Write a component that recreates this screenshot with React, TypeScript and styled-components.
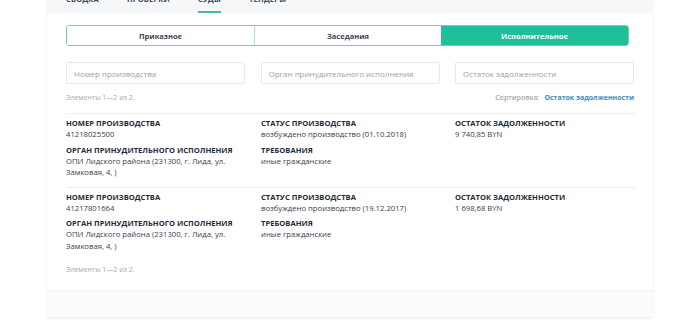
import React from "react";
import styled, { createGlobalStyle } from "styled-components";

const GlobalStyle = createGlobalStyle`
  html, body { margin: 0; padding: 0; background: #ffffff; }
  body { font-family: "Open Sans", "Noto Sans", sans-serif; -webkit-font-smoothing: antialiased; }
  * { box-sizing: border-box; }
`;

const Page = styled.div`
  width: 700px;
  height: 328px;
  overflow: hidden;
  padding-left: 47px;
`;

const Card = styled.div`
  width: 606px;
  margin-top: -12px;
  background: #ffffff;
  box-shadow: 0 1px 3px rgba(20, 40, 60, 0.1);
  border-radius: 0 0 2px 2px;
`;

const TabBar = styled.div`
  height: 25px;
  background: #f5f7f9;
  display: flex;
  align-items: flex-end;
  padding-left: 19px;
  gap: 28px;
`;

const Tab = styled.div<{ $active?: boolean }>`
  font-size: 7.5px;
  font-weight: 700;
  letter-spacing: 0.2px;
  text-transform: uppercase;
  color: #3b4756;
  line-height: 11px;
  height: 25px;
  padding-top: 6px;
  border-bottom: 2px solid ${(p) => (p.$active ? "#3cbfa4" : "transparent")};
`;

const Content = styled.div`
  padding: 12px 19px 0 19px;
`;

const Segmented = styled.div`
  width: 563px;
  height: 21px;
  display: grid;
  grid-template-columns: 1fr 1fr 1fr;
  border: 1.5px solid #6ccfb6;
  border-radius: 3px;
  overflow: hidden;
`;

const Segment = styled.div<{ $active?: boolean; $divider?: boolean }>`
  display: flex;
  align-items: center;
  justify-content: center;
  font-size: 7.5px;
  font-weight: 700;
  color: ${(p) => (p.$active ? "#ffffff" : "#3d4857")};
  background: ${(p) => (p.$active ? "#1fbf9c" : "#ffffff")};
  border-left: ${(p) => (p.$divider ? "1px solid #a8e2d4" : "none")};
`;

const Filters = styled.div`
  margin-top: 16px;
  display: grid;
  grid-template-columns: 179px 179px 179px;
  column-gap: 15.5px;
`;

const Input = styled.input`
  height: 22px;
  border: 1px solid #e7eaed;
  border-radius: 2px;
  padding: 0 7px;
  font-family: inherit;
  font-size: 8px;
  color: #333;
  outline: none;
  &::placeholder { color: #9aa1a8; }
`;

const Meta = styled.div`
  margin-top: 9px;
  width: 568px;
  display: flex;
  justify-content: space-between;
  align-items: center;
  line-height: 10px;
`;

const Muted = styled.span`
  font-size: 7px;
  color: #a3a9ae;
`;

const SortBox = styled.span`
  font-size: 7px;
  color: #a3a9ae;
  font-weight: 600;
  display: flex;
  gap: 5px;
`;

const SortLink = styled.span`
  color: #3c8cc0;
  font-weight: 700;
`;

const List = styled.div`
  margin-top: 10px;
  width: 570px;
`;

const Record = styled.div`
  border-top: 1px solid #eceef0;
  padding: 4px 0 8px;
  display: grid;
  grid-template-columns: 195px 194px 1fr;
`;

const Column = styled.div`
  display: flex;
  flex-direction: column;
  gap: 4px;
`;

const Field = styled.div`
  display: flex;
  flex-direction: column;
`;

const Label = styled.div`
  font-size: 7.6px;
  font-weight: 700;
  color: #1e2b3a;
  text-transform: uppercase;
  line-height: 11px;
`;

const Value = styled.div`
  font-size: 7.7px;
  color: #3a4048;
  line-height: 11.5px;
  max-width: 170px;
`;

const Bottom = styled.div`
  padding: 1px 0 15px;
  line-height: 10px;
`;

const Footer = styled.div`
  height: 27px;
  background: #fbfbfc;
  border-top: 1px solid #f3f4f5;
`;

type Item = {
  num: string;
  status: string;
  debt: string;
};

const items: Item[] = [
  { num: "41218025500", status: "возбуждено производство (01.10.2018)", debt: "9 740,85 BYN" },
  { num: "41217801664", status: "возбуждено производство (19.12.2017)", debt: "1 698,68 BYN" },
];

export default function App() {
  return (
    <Page>
      <GlobalStyle />
      <Card>
        <TabBar>
          <Tab>Сводка</Tab>
          <Tab>Проверки</Tab>
          <Tab $active>Суды</Tab>
          <Tab>Тендеры</Tab>
        </TabBar>
        <Content>
          <Segmented>
            <Segment>Приказное</Segment>
            <Segment $divider>Заседания</Segment>
            <Segment $active>Исполнительное</Segment>
          </Segmented>
          <Filters>
            <Input placeholder="Номер производства" />
            <Input placeholder="Орган принудительного исполнения" />
            <Input placeholder="Остаток задолженности" />
          </Filters>
          <Meta>
            <Muted>Элементы 1—2 из 2.</Muted>
            <SortBox>
              Сортировка: <SortLink>Остаток задолженности</SortLink>
            </SortBox>
          </Meta>
          <List>
            {items.map((it) => (
              <Record key={it.num}>
                <Column>
                  <Field>
                    <Label>Номер производства</Label>
                    <Value>{it.num}</Value>
                  </Field>
                  <Field>
                    <Label>Орган принудительного исполнения</Label>
                    <Value>ОПИ Лидского района (231300, г. Лида, ул. Замковая, 4, )</Value>
                  </Field>
                </Column>
                <Column>
                  <Field>
                    <Label>Статус производства</Label>
                    <Value>{it.status}</Value>
                  </Field>
                  <Field>
                    <Label>Требования</Label>
                    <Value>иные гражданские</Value>
                  </Field>
                </Column>
                <Column>
                  <Field>
                    <Label>Остаток задолженности</Label>
                    <Value>{it.debt}</Value>
                  </Field>
                </Column>
              </Record>
            ))}
          </List>
          <Bottom>
            <Muted>Элементы 1—2 из 2.</Muted>
          </Bottom>
        </Content>
        <Footer />
      </Card>
    </Page>
  );
}
